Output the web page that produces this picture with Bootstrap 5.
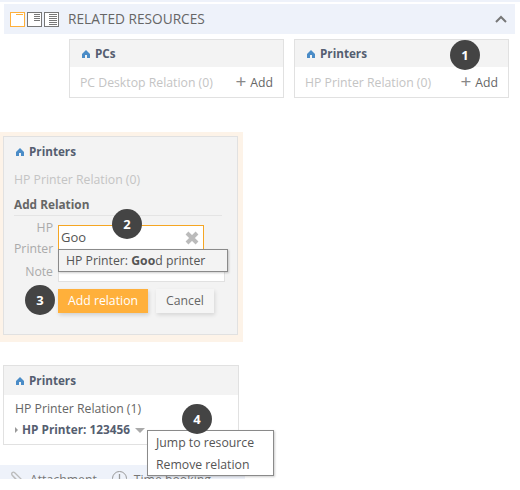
<!DOCTYPE html>
<html lang="en">
<head>
  <meta charset="UTF-8" />
  <title>Related resources</title>
  <link href="https://cdn.jsdelivr.net/npm/bootstrap@5.3.0/dist/css/bootstrap.min.css" rel="stylesheet" />
  <style>
    html, body { height: 100%; }
    body { font-family: "Open Sans", "Noto Sans", sans-serif; font-size: 12.25px; color: #666; background: #fff; overflow: hidden; }
    .shot { position: relative; width: 520px; height: 479px; overflow: hidden; padding-top: 4px; }
    .shot::before { content: ""; position: absolute; left: 0; top: 0; width: 100%; height: 2px; background: #eef2fa; }
    .res-head { height: 30px; margin-left: 4px; margin-right: 5px; background: #eef2fa; padding: 0 8px 0 6px; }
    .res-head .res-title { font-size: 13.7px; color: #666; margin-left: 7px; padding-top: 1px; }
    .view-ico { display: block; margin-right: 2px; flex: none; }
    .top-cards { margin: 5px 0 0 69px; gap: 10px; }
    .rel-panel { border: 1px solid #e1e1e1; background: #fff; }
    .top-cards .rel-panel { width: 215px; height: 59px; }
    .rel-head { height: 27px; background: #f3f3f3; padding: 1px 12px 0; font-weight: 700; color: #555e70; font-size: 11.7px; }
    .rel-head svg { margin-right: 5px; }
    .rel-body { padding: 1px 10px 0; height: 31px; }
    .muted-rel { color: #c4c4c4; }
    .add-link { color: #666; }
    .add-link b { font-weight: 400; font-size: 19px; line-height: 12px; color: #888; margin-right: 4px; vertical-align: -1px; }
    .callout { margin-top: 34px; width: 243px; height: 210px; background: #fdf3e8; padding: 4px 5px 0 3px; }
    .callout .rel-panel { background: #f3f3f3; height: 199px; padding: 0 10px; position: relative; }
    .callout .rel-head { padding: 0 2px; height: 29px; }
    .callout .muted-rel { margin-top: 2px; line-height: 24px; }
    .add-title { font-weight: 700; font-size: 11.8px; margin-top: 1px; line-height: 22px; border-bottom: 1px solid #e4e4e4; height: 23px; width: 208px; color: #666; }
    .lbl { width: 39px; text-align: right; color: #aaa; line-height: 21px; }
    .lbl-two { padding-top: 1px; }
    .goo { width: 146px; height: 25px; margin-left: 5px; margin-top: 9px; background: #fff; border: 1px solid #f5a623; padding-left: 2px; color: #555; font-size: 13px; line-height: 23px; }
    .note-box { width: 167px; height: 14px; background: #fff; border: 1px solid #e1e1e1; border-top: 0; margin-left: 5px; align-self: flex-end; }
    .note-row { margin-top: 2px; }
    .btn-add { background: #ffb03b; color: #fff; border: 0; border-radius: 0; font-size: 12.25px; padding: 0; width: 90px; height: 24px; box-shadow: 1px 2px 4px rgba(0,0,0,.15); }
    .btn-add:hover { background: #ffb03b; color: #fff; }
    .btn-cancel { background: #f5f5f5; color: #666; border: 0; border-radius: 0; font-size: 12.25px; padding: 0; width: 58px; height: 24px; margin-left: 8px; box-shadow: 1px 2px 4px rgba(0,0,0,.12); }
    .btn-row { margin: 7px 0 0 44px; }
    .suggest { position: absolute; left: 54px; top: 112px; width: 170px; height: 23px; background: #f3f3f3; border: 1px solid #8a8a8a; box-shadow: 1px 1px 2px rgba(0,0,0,.2); padding: 2px 7px 0; color: #555; line-height: 17px; white-space: nowrap; }
    .bottom-panel { width: 236px; height: 80px; margin: 23px 0 0 3px; }
    .bottom-panel .rel-head { height: 29px; }
    .bottom-panel .rel-lines { padding: 4px 11px 0; line-height: 20px; }
    .printer-item { font-weight: 700; font-size: 11.8px; color: #555e70; white-space: nowrap; }
    .tri-right { display: inline-block; border-left: 3px solid #999; border-top: 3px solid transparent; border-bottom: 3px solid transparent; margin-right: 4px; vertical-align: 1px; }
    .tri-down { display: inline-block; border-top: 5px solid #aaa; border-left: 5px solid transparent; border-right: 5px solid transparent; margin-left: 5px; vertical-align: 1px; }
    .ctx-menu { position: absolute; left: 147px; top: 430px; width: 127px; height: 46px; background: #fff; border: 1px solid #8a8a8a; box-shadow: 1px 1px 2px rgba(0,0,0,.2); padding: 1px 8px; line-height: 22px; color: #555; white-space: nowrap; }
    .foot-bar { position: absolute; left: 0; top: 465px; width: 245px; height: 14px; background: #eef2fa; padding: 7px 0 0 10px; line-height: 16px; color: #777; white-space: nowrap; overflow: hidden; }
    .foot-bar svg { flex: none; margin-top: -1px; }
    .foot-clip { margin-right: 7px; }
    .foot-clock { margin: 0 7px 0 15px; }
    .foot-caret { margin-left: 19px; }
    .num-badge { position: absolute; width: 30px; height: 30px; border-radius: 50%; background: #444; color: #fff; font-weight: 700; font-size: 13px; line-height: 30px; text-align: center; }
  </style>
</head>
<body>
  <div class="shot">
    <div class="res-head d-flex align-items-center">
      <svg class="view-ico" width="15" height="15" viewBox="0 0 15 15"><rect x=".5" y=".5" width="14" height="14" fill="#fff" stroke="#ffb03b"/><path d="M6 2.5h7" stroke="#ffb03b"/></svg>
      <svg class="view-ico" width="15" height="15" viewBox="0 0 15 15"><rect x=".5" y=".5" width="14" height="14" fill="#fff" stroke="#777"/><path d="M7 2.5h6M7 4.5h6M7 6.5h6M7 8.5h6" stroke="#777"/></svg>
      <svg class="view-ico" width="15" height="15" viewBox="0 0 15 15"><rect x=".5" y=".5" width="14" height="14" fill="#fff" stroke="#777"/><path d="M5 2.5h8M5 4.5h8M5 6.5h8M5 8.5h8M5 10.5h8M5 12.5h8" stroke="#777"/></svg>
      <span class="res-title">RELATED RESOURCES</span>
      <svg class="ms-auto" width="12" height="8" viewBox="0 0 12 8"><path d="M1 7l5-5 5 5" fill="none" stroke="#777" stroke-width="2"/></svg>
    </div>

    <div class="top-cards d-flex">
      <div class="rel-panel">
        <div class="rel-head d-flex align-items-center">
          <svg width="8" height="8" viewBox="0 0 8 8"><path d="M4 0L0 4v4h3V5h2v3h3V4z" fill="#4a8cc7"/></svg>PCs
        </div>
        <div class="rel-body d-flex align-items-center justify-content-between">
          <span class="muted-rel">PC Desktop Relation (0)</span>
          <span class="add-link"><b>+</b>Add</span>
        </div>
      </div>
      <div class="rel-panel">
        <div class="rel-head d-flex align-items-center">
          <svg width="8" height="8" viewBox="0 0 8 8"><path d="M4 0L0 4v4h3V5h2v3h3V4z" fill="#4a8cc7"/></svg>Printers
        </div>
        <div class="rel-body d-flex align-items-center justify-content-between">
          <span class="muted-rel">HP Printer Relation (0)</span>
          <span class="add-link"><b>+</b>Add</span>
        </div>
      </div>
    </div>

    <div class="callout">
      <div class="rel-panel">
        <div class="rel-head d-flex align-items-center">
          <svg width="8" height="8" viewBox="0 0 8 8"><path d="M4 0L0 4v4h3V5h2v3h3V4z" fill="#4a8cc7"/></svg>Printers
        </div>
        <div class="muted-rel">HP Printer Relation (0)</div>
        <div class="add-title">Add Relation</div>
        <div class="d-flex">
          <div class="lbl lbl-two">HP<br />Printer</div>
          <div class="goo d-flex align-items-center justify-content-between pe-1">Goo
            <svg width="14" height="14" viewBox="0 0 14 14"><path d="M2 2l10 10M12 2L2 12" stroke="#bbb" stroke-width="4"/></svg>
          </div>
        </div>
        <div class="d-flex note-row">
          <div class="lbl">Note</div>
          <div class="note-box"></div>
        </div>
        <div class="btn-row d-flex">
          <button class="btn btn-add" type="button">Add relation</button>
          <button class="btn btn-cancel" type="button">Cancel</button>
        </div>
        <div class="suggest">HP Printer: <b>Goo</b>d printer</div>
      </div>
    </div>

    <div class="rel-panel bottom-panel">
      <div class="rel-head d-flex align-items-center">
        <svg width="8" height="8" viewBox="0 0 8 8"><path d="M4 0L0 4v4h3V5h2v3h3V4z" fill="#4a8cc7"/></svg>Printers
      </div>
      <div class="rel-lines">
        <div>HP Printer Relation (1)</div>
        <div class="printer-item"><span class="tri-right"></span>HP Printer: 123456<span class="tri-down"></span></div>
      </div>
    </div>

    <div class="foot-bar d-flex">
      <svg class="foot-clip" width="13" height="14" viewBox="0 0 13 14"><path d="M2 4l7 8c2 1 4-1 3-3L5 2C3 0 1 2 2 4l6 6" stroke="#bbb" fill="none" stroke-width="1.3"/></svg>
      <span>Attachment</span>
      <svg class="foot-clock" width="15" height="15" viewBox="0 0 15 15"><circle cx="7.5" cy="7.5" r="7" fill="none" stroke="#999"/><path d="M7.5 3v5" stroke="#999" stroke-width="1.3"/></svg>
      <span>Time booking</span>
      <svg class="foot-caret" width="6" height="6" viewBox="0 0 6 6"><path d="M3 2l2 3H1z" fill="#888"/></svg>
    </div>
    <div class="ctx-menu">Jump to resource<br />Remove relation</div>

    <div class="num-badge" style="left:450px;top:40px">1</div>
    <div class="num-badge" style="left:112px;top:209px">2</div>
    <div class="num-badge" style="left:25px;top:285px">3</div>
    <div class="num-badge" style="left:182px;top:404px">4</div>
  </div>
  <script src="https://cdn.jsdelivr.net/npm/bootstrap@5.3.0/dist/js/bootstrap.bundle.min.js"></script>
</body>
</html>
